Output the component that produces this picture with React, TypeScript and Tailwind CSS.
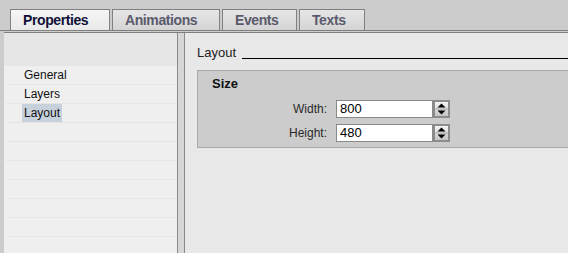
const tabs = [
  { label: 'Properties', width: 'w-[100px]', active: true },
  { label: 'Animations', width: 'w-[108px]', active: false },
  { label: 'Events', width: 'w-[75px]', active: false },
  { label: 'Texts', width: 'w-[66px]', active: false },
]

const items = ['General', 'Layers', 'Layout', '', '', '', '', '', '', '', '']

function Spinner({ id }: { id: string }) {
  return (
    <svg width="17" height="18" viewBox="0 0 17 18" className="shrink-0">
      <defs>
        <linearGradient id={id} x1="0" y1="0" x2="0" y2="1">
          <stop offset="0" stopColor="#f4f4f4" />
          <stop offset="1" stopColor="#c4c4c4" />
        </linearGradient>
      </defs>
      <rect x="0" y="0" width="17" height="18" fill="#8c8c8c" />
      <rect x="2" y="2" width="13" height="14" fill={`url(#${id})`} />
      <path d="M8.5 3.5 L12.5 7.5 L4.5 7.5 Z" fill="#000" />
      <line x1="2" y1="9" x2="15" y2="9" stroke="#a8a8a8" strokeWidth="1" />
      <path d="M4.5 10.5 L12.5 10.5 L8.5 14.5 Z" fill="#000" />
    </svg>
  )
}

function Field({ label, value, id }: { label: string; value: string; id: string }) {
  return (
    <div className="flex items-center h-[18px]">
      <div className="w-[129px] text-right text-[12px] text-[#2a2a2a]">{label}</div>
      <div className="ml-[9px] w-[97px] h-[18px] bg-white border border-[#8a8a8a] pl-[3px] flex items-center text-[13px] text-black">
        {value}
      </div>
      <Spinner id={id} />
    </div>
  )
}

export default function App() {
  return (
    <div className="w-[568px] h-[253px] overflow-hidden bg-[#cccccc] flex flex-col font-['Liberation_Sans',Arial,sans-serif] text-[#1a1a1a]">
      {/* Tab strip */}
      <div className="h-[31px] shrink-0 flex items-end gap-[2px] pl-[10px] border-b border-[#7f7f7f]">
        {tabs.map((tab) => (
          <div
            key={tab.label}
            className={`${tab.width} h-[21px] border border-b-0 border-[#808080] pl-[12px] flex items-center text-[14px] font-bold tracking-[-0.4px] ${
              tab.active
                ? 'bg-gradient-to-b from-[#f6f6f6] to-[#e9e9e9] text-[#101038]'
                : 'bg-gradient-to-b from-[#e6e6e6] to-[#d4d4d4] text-[#5a5a6c]'
            }`}
          >
            {tab.label}
          </div>
        ))}
      </div>

      <div className="flex-1 flex flex-col ml-[4px] min-h-0">
        <div className="h-px bg-[#cdcdcd] shrink-0" />
        <div className="h-px bg-[#7f7f7f] shrink-0" />

        <div className="flex-1 flex min-h-0">
          {/* Left navigation */}
          <div className="w-[173px] bg-[#efefef] flex flex-col overflow-hidden">
            <div className="h-[32px] shrink-0 bg-[#e6e6e6]" />
            {items.map((item, i) => (
              <div key={i} className="h-[19px] shrink-0 ml-[2px] border-t border-[#e5e5e5] flex items-stretch pl-[16px] text-[12px] text-[#111]">
                {item && (
                  <span className={`px-[2px] flex items-center ${item === 'Layout' ? 'bg-[#c7d1db]' : ''}`}>
                    {item}
                  </span>
                )}
              </div>
            ))}
          </div>

          {/* Splitter */}
          <div className="w-px bg-[#8a8a8a]" />
          <div className="w-[6px] bg-[#d6d6d6]" />
          <div className="w-px bg-[#8a8a8a]" />

          {/* Content */}
          <div className="flex-1 bg-[#e8e8e8] pt-[12px] pl-[12px] overflow-hidden">
            <div className="flex items-end h-[15px]">
              <span className="text-[13px] leading-[15px] text-[#222]">Layout</span>
              <div className="flex-1 h-px bg-black ml-[6px] mb-[1px]" />
            </div>

            <div className="mt-[10px] bg-[#cccccc] border border-r-0 border-[#a9a9a9] pt-[5px] pb-[5px] flex flex-col">
              <div className="pl-[14px] text-[13px] leading-[15px] font-bold text-[#111]">Size</div>
              <div className="mt-[9px] flex flex-col gap-[6px]">
                <Field label="Width:" value="800" id="sw" />
                <Field label="Height:" value="480" id="sh" />
              </div>
            </div>
          </div>
        </div>
      </div>
    </div>
  )
}
